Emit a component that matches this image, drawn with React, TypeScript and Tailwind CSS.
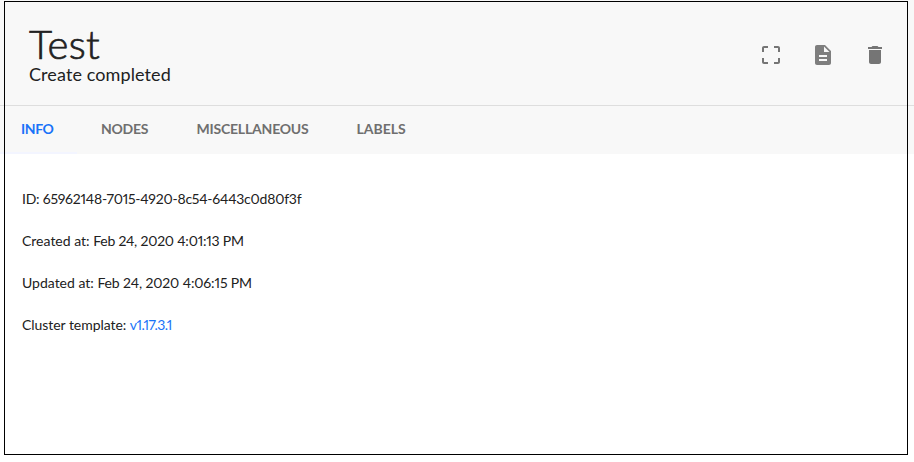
import { type ReactNode } from 'react';

const tabs = [
  { label: 'INFO', cls: 'w-[77px] pl-[21px] text-[#1a73f8] tracking-[-0.4px]' },
  { label: 'NODES', cls: 'w-[96px] pl-6 text-[#6f6f6f] tracking-[-0.25px]' },
  { label: 'MISCELLANEOUS', cls: 'w-[160px] pl-[23.500px] text-[#6f6f6f] tracking-[-0.2px]' },
  { label: 'LABELS', cls: 'w-[96px] pl-[23.500px] text-[#6f6f6f]' },
];

function IconButton({ label, path, cls }: { label: string; path: string; cls: string }) {
  return (
    <button aria-label={label} className={`size-6 ${cls}`}>
      <svg viewBox="0 0 24 24" className="size-6" fill="currentColor">
        <path d={path} />
      </svg>
    </button>
  );
}

function Row({ children }: { children: ReactNode }) {
  return <p className="h-[42px] leading-[20px]">{children}</p>;
}

export default function App() {
  return (
    <div className="relative h-[462px] w-[914px] overflow-hidden bg-white font-['Lato',sans-serif] text-[#212121]">
      <header className="flex h-[106px] items-start justify-between border-b border-[#dedede] bg-[#f8f8f8] pl-[29px] pr-[27px]">
        <div className="pt-6">
          <h1 className="text-[40px] font-light leading-[40px] tracking-[0.3px] [-webkit-text-stroke:0.7px_#212121]">Test</h1>
          <p className="text-[18px] leading-[20px] tracking-[0.100px]">Create completed</p>
        </div>
        <div className="flex gap-7 pt-[43px]">
          <IconButton
            label="Expand"
            cls="text-[#757575]"
            path="M3 5v4h2V5h4V3H5c-1.100 0-2 .9-2 2zm2 10H3v4c0 1.100.9 2 2 2h4v-2H5v-4zm14 4h-4v2h4c1.100 0 2-.9 2-2v-4h-2v4zm0-16h-4v2h4v4h2V5c0-1.100-.9-2-2-2z"
          />
          <IconButton
            label="Details"
            cls="text-[#7e7e7e]"
            path="M14 2H6c-1.100 0-1.990.9-1.990 2L4 20c0 1.100.89 2 1.990 2H18c1.100 0 2-.9 2-2V8l-6-6zm2 16H8v-2h8v2zm0-4H8v-2h8v2zm-3-5V3.500L18.500 9H13z"
          />
          <IconButton
            label="Delete"
            cls="text-[#757575]"
            path="M6 19c0 1.100.9 2 2 2h8c1.100 0 2-.9 2-2V7H6v12zM19 4h-3.500l-1-1h-5l-1 1H5v2h14V4z"
          />
        </div>
      </header>
      <nav className="flex h-12 bg-[#f8f8f8] text-[14px] font-bold leading-[46px]">
        {tabs.map((t, i) => (
          <div key={t.label} className={`h-12 border-b-2 ${i === 0 ? 'border-[#f3f5ff]' : 'border-transparent'} ${t.cls}`}>
            {t.label}
          </div>
        ))}
      </nav>
      <main className="pl-[22px] pt-[35px] text-[14px] proportional-nums">
        <Row>
          <span className="tracking-[-0.230px]">ID: 65962148-7015-4920-8c54-6443c0d80f3f</span>
        </Row>
        <Row>
          Created at: <span className="tracking-[-0.220px]">Feb 24, 2020 4:01:13 PM</span>
        </Row>
        <Row>
          Updated at: <span className="tracking-[-0.130px]">Feb 24, 2020 4:06:15 PM</span>
        </Row>
        <Row>
          <span className="tracking-[-0.05px]">Cluster template: </span>
          <a className="text-[#1a73f8] tracking-[-0.550px]">v1.17.3.1</a>
        </Row>
      </main>
      <div className="pointer-events-none absolute left-1 top-px h-[454px] w-[904px] border border-black" />
    </div>
  );
}
